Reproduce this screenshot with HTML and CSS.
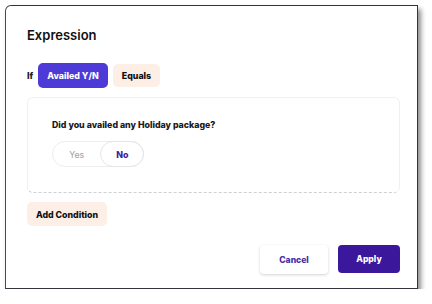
FILE: index.html
```html
<!DOCTYPE html>
<html lang="en">
<head>
    <meta charset="UTF-8">
    <meta name="viewport" content="width=device-width, initial-scale=1.0">
    <title>Expression</title>
    <link rel="stylesheet" href="styles.css">
</head>
<body>
    <div class="dialog">
        <h1 class="title">Expression</h1>

        <div class="if-row">
            <span class="if-label">If</span>
            <button class="chip chip-primary">Availed Y/N</button>
            <button class="chip chip-soft">Equals</button>
        </div>

        <div class="condition-card">
            <p class="question">Did you availed any Holiday package?</p>
            <div class="toggle">
                <span class="toggle-option">Yes</span>
                <span class="toggle-option active">No</span>
            </div>
        </div>

        <button class="chip chip-soft add-btn">Add Condition</button>

        <div class="actions">
            <button class="btn btn-cancel">Cancel</button>
            <button class="btn btn-apply">Apply</button>
        </div>
    </div>
</body>
</html>
```

FILE: styles.css
```css
* {
    box-sizing: border-box;
}
body {
    margin: 0;
    padding: 0;
    background: #fff;
    font-family: Inter, "Noto Sans", sans-serif;
}
.dialog {
    margin: 5px 0 0 5px;
    width: 413px;
    height: 284px;
    border: 1px solid #34343c;
    border-left-color: #4a4860;
    border-radius: 6px 0 0 0;
    box-shadow: 3px 4px 5px rgba(0, 0, 0, 0.45);
    background: #fff;
    padding: 20px 17px 0 21px;
}
.title {
    margin: 0;
    font-size: 13px;
    line-height: 18px;
    font-weight: 600;
    color: #111;
}
.if-row {
    display: flex;
    align-items: center;
    gap: 5px;
    margin-top: 19px;
}
.if-label {
    font-size: 9px;
    font-weight: 800;
    color: #222;
    width: 6px;
}
.chip {
    border: none;
    font-family: inherit;
    font-size: 8.8px;
    font-weight: 800;
    border-radius: 5px;
    padding: 0;
    cursor: pointer;
}
.chip-primary {
    width: 70px;
    height: 25px;
    background: #4e3ad6;
    color: #fff;
}
.chip-soft {
    width: 47px;
    height: 23px;
    background: #fdefe5;
    color: #111;
}
.condition-card {
    margin-top: 9px;
    height: 96px;
    border: 1px solid #f0f0f2;
    border-bottom: 1px dashed #cfcfd6;
    border-radius: 6px;
    padding: 21px 0 0 24px;
}
.question {
    margin: 0;
    font-size: 8.8px;
    line-height: 12px;
    font-weight: 800;
    color: #1a1a1a;
}
.toggle {
    display: flex;
    width: 92px;
    height: 26px;
    margin-top: 10px;
    border: 1px solid #ededed;
    border-radius: 13px;
}
.toggle-option {
    display: flex;
    align-items: center;
    justify-content: center;
    width: 48px;
    font-size: 8.8px;
    color: #a0a0a0;
}
.toggle-option.active {
    width: 44px;
    margin: -1px -1px -1px 0;
    border: 1px solid #e6e6e6;
    border-radius: 13px;
    color: #3a1fa0;
    font-weight: 800;
}
.add-btn {
    display: block;
    margin-top: 9px;
    width: 80px;
    height: 24px;
}
.actions {
    display: flex;
    justify-content: flex-end;
    gap: 10px;
    margin-top: 19px;
}
.btn {
    border: none;
    border-radius: 4px;
    font-family: inherit;
    font-size: 8.6px;
    font-weight: 800;
    cursor: pointer;
}
.btn-cancel {
    width: 68px;
    height: 29px;
    background: #fff;
    color: #4a2ba6;
    box-shadow: 0 1px 3px rgba(0, 0, 0, 0.18);
}
.btn-apply {
    width: 62px;
    height: 28px;
    background: #3b179c;
    color: #fff;
}
```
